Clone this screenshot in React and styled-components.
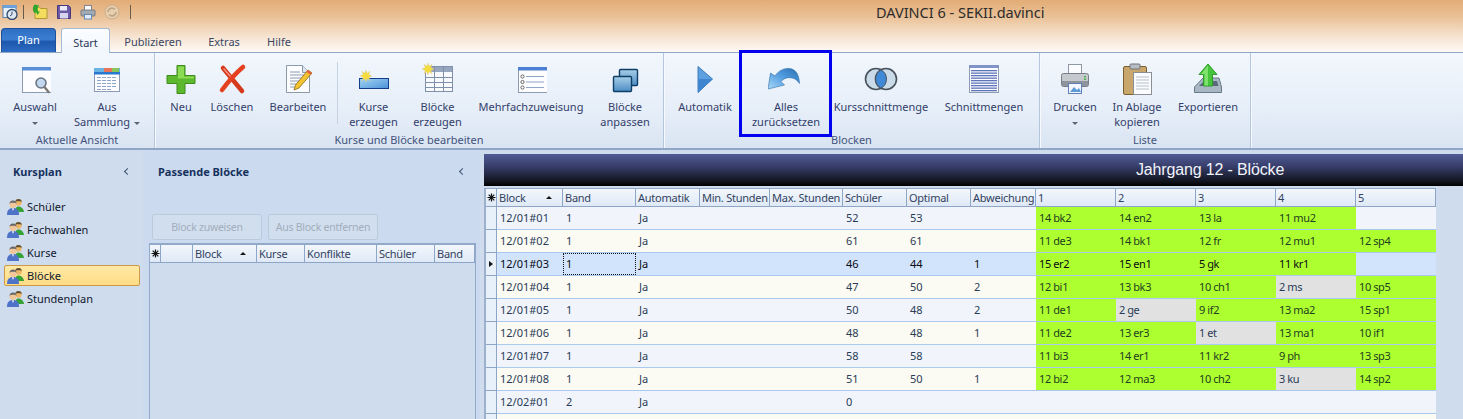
import React from 'react';
import styled, { createGlobalStyle } from 'styled-components';

const GlobalStyle = createGlobalStyle`
  html, body {
    margin: 0;
    padding: 0;
    background: #cfdcee;
  }
  *, *::before, *::after {
    box-sizing: border-box;
  }
`;

const FONT = `"Noto Sans", "Liberation Sans", sans-serif`;

const Window = styled.div`
  width: 1463px;
  height: 419px;
  overflow: hidden;
  font-family: ${FONT};
  font-size: 11px;
  background: #cfdcee;
  display: flex;
  flex-direction: column;
`;

const Header = styled.div`
  height: 52px;
  flex: none;
  background: linear-gradient(180deg, #e3ad76 0%, #e9bf94 30%, #f6e3d0 70%, #fdf9f5 100%);
`;

const TitleBar = styled.div`
  height: 28px;
  display: flex;
  align-items: center;
`;

const QuickBar = styled.div`
  width: 876px;
  flex: none;
  display: flex;
  align-items: center;
  gap: 8px;
  padding-left: 2px;
  margin-top: -4px;
`;

const QuickSep = styled.span`
  width: 1px;
  height: 14px;
  background: #6a5a48;
  margin-left: ${(p) => p.$left || 0}px;
`;

const WindowTitle = styled.div`
  font-size: 14.5px;
  color: #2c2c2c;
  margin-top: -4px;
`;

const TabRow = styled.div`
  height: 24px;
  display: flex;
  align-items: flex-end;
  padding-left: 1px;
`;

const PlanButton = styled.div`
  width: 55px;
  height: 24px;
  border: 1px solid #1c4f9c;
  border-bottom: none;
  border-radius: 4px 4px 0 0;
  background: linear-gradient(180deg, #2f6fc4 0%, #3a7ed2 45%, #1d57ab 55%, #2c6cc4 100%);
  color: #fff;
  display: flex;
  align-items: center;
  justify-content: center;
  padding-bottom: 3px;
  margin-right: 5px;
`;

const Tab = styled.div`
  height: 24px;
  width: ${(p) => p.$width}px;
  display: flex;
  align-items: center;
  justify-content: center;
  color: #3b4663;
  padding-top: 3px;
  position: relative;
  ${(p) =>
    p.$active &&
    `
    color: #26365a;
    background: linear-gradient(180deg, #fbfdff 0%, #f1f6fc 100%);
    border: 1px solid #a7bcd6;
    border-bottom: none;
    border-radius: 3px 3px 0 0;
    z-index: 1;
    margin-bottom: -1px;
    height: 25px;
  `}
`;

const Ribbon = styled.div`
  height: 98px;
  flex: none;
  display: flex;
  border-top: 1px solid #8fa6c6;
  border-bottom: 2px solid #90a6c4;
  background: linear-gradient(180deg, #f2f7fd 0%, #e6eef8 60%, #d9e4f2 100%);
`;

const Group = styled.div`
  width: ${(p) => p.$width}px;
  flex: none;
  display: flex;
  flex-direction: column;
  padding-left: ${(p) => p.$pad || 0}px;
  border-right: 1px solid #b4c6dc;
  box-shadow: 1px 0 0 #f6f9fd;
`;

const GroupButtons = styled.div`
  height: 79px;
  display: flex;
`;

const GroupLabel = styled.div`
  margin-left: ${(p) => -(p.$pad || 0)}px;
  text-align: center;
  line-height: 15px;
  color: #44537c;
`;

const RibbonSep = styled.span`
  width: 1px;
  height: 62px;
  margin: 9px 0 0 1px;
  background: #c5d2e2;
  flex: none;
`;

const RibbonButton = styled.div`
  width: ${(p) => p.$width}px;
  flex: none;
  display: flex;
  flex-direction: column;
  align-items: center;
  padding-top: 10px;
  position: relative;
  color: #33406b;
  text-align: center;
  line-height: 15px;
  white-space: nowrap;
  ${(p) =>
    p.$marked &&
    `
    &::after {
      content: '';
      position: absolute;
      left: -1px;
      top: -3px;
      width: 93px;
      height: 87px;
      border: 3px solid #0000ee;
    }
  `}
`;

const ButtonIcon = styled.div`
  height: 32px;
  margin-bottom: 4px;
  flex: none;
`;

const Caret = styled.span`
  display: inline-block;
  width: 0;
  height: 0;
  border-left: 3px solid transparent;
  border-right: 3px solid transparent;
  border-top: 3px solid #5c6675;
  vertical-align: middle;
  margin-left: ${(p) => p.$left || 0}px;
`;

const Main = styled.div`
  flex: 1;
  display: flex;
  min-height: 0;
`;

const NavPanel = styled.div`
  width: 143px;
  flex: none;
  background: #cfdcee;
  padding-top: 12px;
`;

const PanelHead = styled.div`
  height: 18px;
  display: flex;
  align-items: center;
  justify-content: space-between;
  font-weight: 700;
  color: #17315d;
  padding: ${(p) => p.$pad};
`;

const Chevron = styled.span`
  width: 5px;
  height: 5px;
  border-left: 1.6px solid #3d5272;
  border-bottom: 1.6px solid #3d5272;
  transform: rotate(45deg);
`;

const NavList = styled.div`
  margin-top: 15px;
  display: flex;
  flex-direction: column;
  padding-left: 4px;
`;

const NavItem = styled.div`
  width: 136px;
  height: 23px;
  display: flex;
  align-items: center;
  gap: 3px;
  padding-left: 3px;
  color: #10182c;
  border-radius: 2px;
  ${(p) =>
    p.$active &&
    `
    height: 21px;
    margin: 1px 0;
    background: linear-gradient(180deg, #ffe9a6 0%, #ffdc85 100%);
    border: 1px solid #cc9a47;
    padding-left: 2px;
  `}
`;

const MatchPanel = styled.div`
  width: 337px;
  flex: none;
  background: #cbdaee;
  padding-top: 12px;
  display: flex;
  flex-direction: column;
`;

const ActionRow = styled.div`
  display: flex;
  gap: 6px;
  margin: 34px 0 3px 9px;
`;

const ActionButton = styled.div`
  width: 110px;
  height: 26px;
  display: flex;
  align-items: center;
  justify-content: center;
  font-size: 10.5px;
  letter-spacing: -0.25px;
  color: #a2adbc;
  background: #d1deee;
  border: 1px solid #bccadd;
  border-radius: 2px;
`;

const MiniGrid = styled.div`
  flex: 1;
  margin: 0 4px 0 6px;
  background: #cfdcee;
  border: 1px solid #93a9c8;
  border-top-width: 2px;
  border-bottom: none;
`;

const HeadRow = styled.div`
  display: grid;
  grid-template-columns: ${(p) => p.$cols};
  height: 18px;
`;

const HeadCell = styled.div`
  display: flex;
  align-items: center;
  justify-content: space-between;
  padding: 0 2px;
  letter-spacing: -0.25px;
  color: #33425f;
  white-space: nowrap;
  overflow: hidden;
  background: linear-gradient(180deg, #f3f7fd 0%, #dfe9f6 100%);
  border-right: 1px solid #8da5c6;
  border-bottom: 1px solid #8da5c6;
  ${(p) => p.$star && 'justify-content: center; padding: 0; color: #111;'}
`;

const SortArrow = styled.span`
  width: 0;
  height: 0;
  margin-right: 8px;
  border-left: 3.5px solid transparent;
  border-right: 3.5px solid transparent;
  border-bottom: 3.5px solid #111;
  flex: none;
`;

const Splitter = styled.div`
  width: 4px;
  flex: none;
  background: #cfdcee;
`;

const Content = styled.div`
  flex: 1;
  display: flex;
  flex-direction: column;
  min-width: 0;
  padding-top: 4px;
  background: #cfdcee;
`;

const ContentTitle = styled.div`
  height: 32px;
  flex: none;
  margin-bottom: 2px;
  display: flex;
  align-items: center;
  padding-left: 652px;
  font-family: "Liberation Sans", Arial, sans-serif;
  font-size: 16px;
  letter-spacing: -0.15px;
  color: #f2f4fa;
  background: linear-gradient(180deg, #515b93 0%, #3a4170 35%, #12141f 85%, #000 100%);
`;

const GridWrap = styled.div`
  width: 952px;
  flex: 1;
  border-left: 2px solid #9db1cd;
  border-top: 1px solid #93a9c8;
  background: #fbfbf3;
`;

const Row = styled.div`
  display: grid;
  grid-template-columns: ${(p) => p.$cols};
  height: 23px;
  line-height: 22px;
  color: ${(p) => (p.$selected ? '#0a0a14' : '#2a3c58')};
  background: ${(p) => (p.$selected ? '#d2e4fb' : p.$odd ? '#f1f5fb' : '#fbfbf3')};
  border-bottom: 1px solid #a9c9ee;
`;

const RowHead = styled.div`
  background: #e8f0fa;
  border-right: 1px solid #8da5c6;
  margin-bottom: -1px;
  border-bottom: 1px solid #8da5c6;
  display: flex;
  align-items: center;
  justify-content: center;
`;

const RowPointer = styled.span`
  width: 0;
  height: 0;
  border-top: 3.5px solid transparent;
  border-bottom: 3.5px solid transparent;
  border-left: 4px solid #111;
`;

const Cell = styled.div`
  padding-left: 3px;
  white-space: nowrap;
  overflow: hidden;
  ${(p) => p.$focus && 'outline: 1px dotted #111; outline-offset: -1px;'}
`;

const CourseCell = styled(Cell)`
  letter-spacing: -0.3px;
  word-spacing: -0.4px;
  background: ${(p) =>
    p.$tint === 'green' ? '#adff2f' : p.$tint === 'gray' ? '#e1e1e1' : 'transparent'};
  color: ${(p) => (p.$tint === 'green' && !p.$strong ? '#1f4020' : 'inherit')};
`;

const Star = () => (
  <svg width="9" height="9" viewBox="0 0 9 9">
    <path d="M4.5 0.5v8M0.5 4.5h8M1.7 1.7l5.6 5.6M7.3 1.7l-5.6 5.6" stroke="#111" strokeWidth="1.2" />
  </svg>
);

const People = () => (
  <svg width="17" height="18" viewBox="0 0 17 18">
    <circle cx="11.5" cy="4.5" r="3.2" fill="#eeb768" />
    <path d="M8.3 4.2a3.2 3.2 0 0 1 6.4 0l-1.2-1h-4z" fill="#5f4f30" />
    <path d="M8 14c0-4 1.5-5.5 3.5-5.5S16.5 10 17 14z" fill="#36a336" />
    <circle cx="6" cy="6.5" r="3.5" fill="#efc79a" />
    <path d="M2.5 6a3.5 3.5 0 0 1 7 0L8.2 4.8H3.8z" fill="#666" />
    <path d="M0 17c0-5 2-7 6-7s6 2 6 7z" fill="#4f73c8" />
    <path d="M5 10.2h2l-1 2.8z" fill="#fff" />
  </svg>
);

const WindowIcon = ({ children, bar = '#5a8fd8' }) => (
  <g>
    <rect x="3.5" y="4.5" width="29" height="25" fill="#fdfdff" stroke="#8b9cb4" />
    <rect x="3" y="4" width="30" height="3.5" fill={bar} />
    {children}
  </g>
);

const AuswahlIcon = () => (
  <svg width="32" height="32" viewBox="0 0 32 32">
    <WindowIcon />
    <circle cx="22" cy="20" r="5" fill="#c3d7ee" stroke="#6b7684" strokeWidth="1.6" />
    <path d="M25.5 24l4 5" stroke="#7b7b73" strokeWidth="2.4" strokeLinecap="round" />
  </svg>
);

const SammlungIcon = () => (
  <svg width="32" height="32" viewBox="0 0 32 32">
    <rect x="3.5" y="5.5" width="25" height="23" fill="#fdfdff" stroke="#8b9cb4" />
    <rect x="3" y="5" width="26" height="4" fill="#6ab4e4" />
    <rect x="13" y="5" width="8" height="4" fill="#e8745a" />
    <rect x="21" y="5" width="7" height="4" fill="#86c65a" />
    <rect x="3" y="9" width="26" height="2.5" fill="#2878d0" />
    <path d="M6 14.5h20M6 17.5h20M6 20.5h20M6 23.5h20M6 26.5h14" stroke="#8fa6c8" strokeDasharray="4 1" />
  </svg>
);

const PlusIcon = () => (
  <svg width="32" height="32" viewBox="0 0 32 32">
    <path d="M12 2.5h8v10h10v8H20v10h-8v-10H2v-8h10z" fill="#5cb82c" stroke="#3f8a1c" />
    <path d="M13 3.5h6v10h10v2H13z" fill="#8bdc52" />
  </svg>
);

const CrossIcon = () => (
  <svg width="32" height="32" viewBox="0 0 32 32">
    <path d="M7 5L26 28" stroke="#d63a1e" strokeWidth="4.5" strokeLinecap="round" />
    <path d="M27 4C20 10 12 19 6 27" stroke="#e5401f" strokeWidth="4.5" strokeLinecap="round" />
    <path d="M8 6l6 7" stroke="#f69080" strokeWidth="1.4" strokeLinecap="round" />
  </svg>
);

const EditIcon = () => (
  <svg width="32" height="32" viewBox="0 0 32 32">
    <path d="M4.5 2.5h16l7 7v20h-23z" fill="#fbfdff" stroke="#8c99a8" />
    <path d="M20.5 2.5v7h7" fill="#dbe4ee" stroke="#8c99a8" />
    <path d="M8 9h10M8 12h14M8 15h14M8 18h10M8 21h8M8 24h6" stroke="#8f9cb4" />
    <path d="M26 7l4 3-13 15-5 2 1.5-5z" fill="#f4c430" stroke="#8a6a18" strokeWidth=".8" />
    <path d="M26 7l4 3-1.6 1.8-4-3z" fill="#e5603c" />
  </svg>
);

const Burst = ({ x, y }) => (
  <g transform={`translate(${x} ${y})`}>
    <path
      d="M6 0l1.2 3.2L10 1.2 8.8 4.4 12 6 8.8 7.4 10 10.8 7.2 8.8 6 12 4.8 8.8 2 10.8 3.2 7.4 0 6l3.2-1.6L2 1.2l2.8 2z"
      fill="#f4dd3c"
      stroke="#d8c8a0"
      strokeWidth=".4"
    />
  </g>
);

const KurseIcon = () => (
  <svg width="32" height="32" viewBox="0 0 32 32">
    <defs>
      <linearGradient id="kg" x1="0" y1="0" x2="1" y2="1">
        <stop offset="0" stopColor="#a4d6f4" />
        <stop offset="1" stopColor="#4a90d8" />
      </linearGradient>
    </defs>
    <rect x="1.5" y="15.5" width="29" height="10" fill="url(#kg)" stroke="#163d8c" />
    <Burst x={2} y={7} />
  </svg>
);

const BloeckeIcon = () => (
  <svg width="32" height="32" viewBox="0 0 32 32">
    <rect x="3.5" y="3.5" width="27" height="25" fill="#f8f9fc" stroke="#8190aa" />
    <rect x="4" y="4" width="26" height="5" fill="#98a5be" />
    <path d="M3.5 14.5h27M3.5 19.5h27M3.5 24.5h27M12.5 3.5v25M21.5 3.5v25" stroke="#8190aa" />
    <Burst x={0} y={0} />
  </svg>
);

const MehrfachIcon = () => (
  <svg width="32" height="32" viewBox="0 0 32 32">
    <WindowIcon bar="#4c80d4" />
    <path d="M11 13.5h18M11 19h18M11 24.5h18" stroke="#8ea6c6" />
    <circle cx="7.5" cy="13.5" r="1.6" fill="#fff" stroke="#666" />
    <circle cx="7.5" cy="19" r="1.6" fill="#fff" stroke="#666" />
    <circle cx="7.5" cy="24.5" r="1.6" fill="#fff" stroke="#666" />
  </svg>
);

const AnpassenIcon = () => (
  <svg width="32" height="32" viewBox="0 0 32 32">
    <defs>
      <linearGradient id="ag" x1="0" y1="0" x2="0" y2="1">
        <stop offset="0" stopColor="#a8cfe8" />
        <stop offset="1" stopColor="#4c8cc4" />
      </linearGradient>
    </defs>
    <rect x="10.5" y="6.5" width="18" height="16" rx="1" fill="url(#ag)" stroke="#0e3d66" strokeWidth="1.4" />
    <rect x="4.5" y="13.5" width="18" height="15" rx="1" fill="url(#ag)" stroke="#0e3d66" strokeWidth="1.4" />
  </svg>
);

const PlayIcon = () => (
  <svg width="32" height="32" viewBox="0 0 32 32">
    <path d="M9 3.5L23.5 16 9 29.5z" fill="#5da0e0" stroke="#3f7ebc" />
    <path d="M9 16h14.5L9 29.5z" fill="#3f86d0" />
  </svg>
);

const UndoIcon = () => (
  <svg width="36" height="32" viewBox="0 0 36 32">
    <defs>
      <linearGradient id="ug" x1="0" y1="1" x2="1" y2="0">
        <stop offset="0" stopColor="#a8d8f8" />
        <stop offset=".55" stopColor="#4f9ade" />
        <stop offset="1" stopColor="#2a6fb0" />
      </linearGradient>
    </defs>
    <path
      d="M0 26L2.5 10L7 13C10 8 16 5 21 5.5C27 6 31 10 31.5 20.5C29 17 27 15.5 24 15C20 14 16 15 13 18.5L16.5 22Z"
      fill="url(#ug)"
      stroke="#2f6ea8"
      strokeWidth=".6"
    />
  </svg>
);

const VennIcon = () => (
  <svg width="34" height="32" viewBox="0 0 34 32">
    <circle cx="12" cy="16" r="10.5" fill="#c9dae8" stroke="#49525c" strokeWidth="1.6" />
    <circle cx="22" cy="16" r="10.5" fill="#c9dae8" stroke="#49525c" strokeWidth="1.6" />
    <path d="M17 6.8A10.5 10.5 0 0 1 17 25.2A10.5 10.5 0 0 1 17 6.8Z" fill="#3f8ad8" stroke="#49525c" />
  </svg>
);

const LinesIcon = () => (
  <svg width="32" height="32" viewBox="0 0 32 32">
    <rect x="1.5" y="2.5" width="29" height="27" fill="#fdfdff" stroke="#8b9cb4" />
    <rect x="1" y="2" width="30" height="3" fill="#8194c8" />
    {[7, 9.5, 12, 14.5, 17, 19.5, 22, 24.5, 27].map((y) => (
      <rect key={y} x="3" y={y} width="26" height="1.3" fill="#5d74b8" />
    ))}
  </svg>
);

const PrinterIcon = () => (
  <svg width="32" height="32" viewBox="0 0 32 32">
    <rect x="9.5" y="1.5" width="13" height="10" fill="#fbfcff" stroke="#9098a4" />
    <rect x="2.5" y="10.5" width="27" height="13" rx="2" fill="#c5c9ce" stroke="#777e88" />
    <rect x="3" y="18" width="26" height="5" fill="#8e949c" />
    <rect x="25" y="13" width="2" height="1.5" fill="#50b050" />
    <rect x="25" y="15.5" width="2" height="1.5" fill="#50b050" />
    <rect x="9.5" y="20.5" width="13" height="10" fill="#f4f7ff" stroke="#5f7fb8" />
    <path d="M11 29l4-5 3 3 2-2 2 4z" fill="#5d9ad8" />
  </svg>
);

const ClipboardIcon = () => (
  <svg width="32" height="32" viewBox="0 0 32 32">
    <rect x="2.5" y="3.5" width="23" height="28" rx="1.5" fill="#c9a76c" stroke="#7a5f30" />
    <rect x="9" y="1" width="10" height="5" rx="1" fill="#b8bdc4" stroke="#6e747c" />
    <rect x="12.5" y="9.5" width="18" height="22" fill="#fbfcfd" stroke="#8a8f96" />
    <path d="M15 14h13M15 17h13M15 20h13M15 23h13M15 26h13" stroke="#b7bfca" />
  </svg>
);

const ExportIcon = () => (
  <svg width="32" height="32" viewBox="0 0 32 32">
    <path d="M2.5 24L11 15h16l2.5 9v5.500h-27z" fill="#a9b6c4" stroke="#6a7a8a" />
    <path d="M7 23l5-5h13l1.5 5z" fill="#5b6a7a" />
    <path d="M16 1l9 10.5h-4.5V23h-9V11.5H7z" fill="#45c43c" stroke="#2f9a2c" />
    <path d="M16 2.5v20h-3.5V11H9z" fill="#7fe26c" />
  </svg>
);

const ClockWindow = () => (
  <svg width="16" height="16" viewBox="0 0 16 16">
    <rect x="1" y="1.5" width="13" height="12" fill="#e8f0fa" stroke="#5d7ea6" />
    <rect x=".5" y="1" width="14" height="3" fill="#6ba0d8" />
    <circle cx="10" cy="10.5" r="5" fill="#dfe8f0" stroke="#2f4a70" strokeWidth="1.3" />
    <path d="M10 7.5v3l-2 1.5" stroke="#2f4a70" fill="none" />
  </svg>
);

const FolderSmall = () => (
  <svg width="16" height="16" viewBox="0 0 16 16">
    <path d="M3 3h4.5l1 1.5h6.5v10H3z" fill="#f4dc5c" stroke="#b09a34" />
    <path d="M2.5 .5C.2 3.5.5 7 3 9.5l1-1.8 1.4 3.3 2.6-3.6-1.6.3C5 5.5 5.5 3.5 7 1.5z" fill="#2ea52e" />
  </svg>
);

const FloppySmall = () => (
  <svg width="16" height="16" viewBox="0 0 16 16">
    <path d="M1.5 1.5h11l2 2v11h-13z" fill="#6a5aa8" stroke="#46387c" />
    <rect x="4" y="2" width="7" height="4.5" fill="#eceaf6" />
    <rect x="4" y="9" width="8" height="5.5" fill="#d8d4ec" />
  </svg>
);

const PrinterSmall = () => (
  <svg width="16" height="16" viewBox="0 0 16 16">
    <rect x="4.5" y="1.5" width="7" height="5" fill="#fafbff" stroke="#80868f" />
    <rect x="1" y="6" width="14" height="6" rx="1" fill="#a4aab2" stroke="#666d76" strokeWidth=".8" />
    <rect x="4.5" y="10.5" width="7" height="4.5" fill="#e4eefa" stroke="#5f86b8" />
  </svg>
);

const RefreshSmall = () => (
  <svg width="16" height="16" viewBox="0 0 16 16">
    <circle cx="8" cy="8" r="7" fill="#e8cfae" stroke="#c9ae8c" />
    <path d="M4 8a4 4 0 0 1 7-2.5M12 8a4 4 0 0 1-7 2.5" stroke="#bda484" strokeWidth="1.6" fill="none" />
  </svg>
);

const NAV_ITEMS = ['Schüler', 'Fachwahlen', 'Kurse', 'Blöcke', 'Stundenplan'];

const MINI_COLS = '11px 32px 64px 48px 72px 58px 1fr';
const MINI_HEAD = ['', 'Block', 'Kurse', 'Konflikte', 'Schüler', 'Band'];

const COLS = '11px 66px 73px 64px 70px 73px 64px 64px 65px 80px 80px 80px 80px 80px';
const COL_HEAD = [
  'Block', 'Band', 'Automatik', 'Min. Stunden', 'Max. Stunden', 'Schüler',
  'Optimal', 'Abweichung', '1', '2', '3', '4', '5',
];

const ROWS = [
  { id: '12/01#01', band: '1', s: '52', o: '53', d: '', k: ['14 bk2', '14 en2', '13 la', '11 mu2', ''] },
  { id: '12/01#02', band: '1', s: '61', o: '61', d: '', k: ['11 de3', '14 bk1', '12 fr', '12 mu1', '12 sp4'] },
  { id: '12/01#03', band: '1', s: '46', o: '44', d: '1', k: ['15 er2', '15 en1', '5 gk', '11 kr1', ''], selected: true },
  { id: '12/01#04', band: '1', s: '47', o: '50', d: '2', k: ['12 bi1', '13 bk3', '10 ch1', '2 ms', '10 sp5'], gray: 3 },
  { id: '12/01#05', band: '1', s: '50', o: '48', d: '2', k: ['11 de1', '2 ge', '9 if2', '13 ma2', '15 sp1'], gray: 1 },
  { id: '12/01#06', band: '1', s: '48', o: '48', d: '1', k: ['11 de2', '13 er3', '1 et', '13 ma1', '10 if1'], gray: 2 },
  { id: '12/01#07', band: '1', s: '58', o: '58', d: '', k: ['11 bi3', '14 er1', '11 kr2', '9 ph', '13 sp3'] },
  { id: '12/01#08', band: '1', s: '51', o: '50', d: '1', k: ['12 bi2', '12 ma3', '10 ch2', '3 ku', '14 sp2'], gray: 3 },
  { id: '12/02#01', band: '2', s: '0', o: '', d: '', k: ['', '', '', '', ''] },
  { id: '', band: '', s: '', o: '', d: '', k: ['', '', '', '', ''] },
];

const RIBBON = [
  {
    label: 'Aktuelle Ansicht',
    width: 155,
    pad: 5,
    items: [
      { w: 60, icon: <AuswahlIcon />, text: 'Auswahl', caret: 'below' },
      { w: 84, icon: <SammlungIcon />, text: 'Aus', line2: 'Sammlung', caret: 'inline' },
    ],
  },
  {
    label: 'Kurse und Blöcke bearbeiten',
    width: 509,
    pad: 3,
    items: [
      { w: 46, icon: <PlusIcon />, text: 'Neu' },
      { w: 56, icon: <CrossIcon />, text: 'Löschen' },
      { w: 76, icon: <EditIcon />, text: 'Bearbeiten' },
      { sep: true },
      { w: 71, icon: <KurseIcon />, text: 'Kurse', line2: 'erzeugen' },
      { w: 57, icon: <BloeckeIcon />, text: 'Blöcke', line2: 'erzeugen' },
      { w: 130, icon: <MehrfachIcon />, text: 'Mehrfachzuweisung' },
      { w: 58, icon: <AnpassenIcon />, text: 'Blöcke', line2: 'anpassen' },
    ],
  },
  {
    label: 'Blocken',
    width: 376,
    pad: 6,
    items: [
      { w: 70, icon: <PlayIcon />, text: 'Automatik' },
      { w: 92, icon: <UndoIcon />, text: 'Alles', line2: 'zurücksetzen', marked: true },
      { w: 98, icon: <VennIcon />, text: 'Kursschnittmenge' },
      { w: 108, icon: <LinesIcon />, text: 'Schnittmengen' },
    ],
  },
  {
    label: 'Liste',
    width: 211,
    pad: 6,
    items: [
      { w: 58, icon: <PrinterIcon />, text: 'Drucken', caret: 'below' },
      { w: 66, icon: <ClipboardIcon />, text: 'In Ablage', line2: 'kopieren' },
      { w: 76, icon: <ExportIcon />, text: 'Exportieren' },
    ],
  },
];

const RibbonItem = ({ item }) => (
  <RibbonButton $width={item.w} $marked={item.marked}>
    <ButtonIcon>{item.icon}</ButtonIcon>
    <div>{item.text}</div>
    {item.line2 && (
      <div>
        {item.line2}
        {item.caret === 'inline' && <Caret $left={4} />}
      </div>
    )}
    {item.caret === 'below' && (
      <div>
        <Caret />
      </div>
    )}
  </RibbonButton>
);

const courseTint = (row, j) => {
  if (!row.k[j]) return undefined;
  return row.gray === j ? 'gray' : 'green';
};

export default function App() {
  return (
    <Window>
      <GlobalStyle />
      <Header>
        <TitleBar>
          <QuickBar>
            <ClockWindow />
            <QuickSep $left={-3} />
            <FolderSmall />
            <FloppySmall />
            <PrinterSmall />
            <RefreshSmall />
            <QuickSep $left={2} />
          </QuickBar>
          <WindowTitle>DAVINCI 6 - SEKII.davinci</WindowTitle>
        </TitleBar>
        <TabRow>
          <PlanButton>Plan</PlanButton>
          <Tab $active $width={49}>Start</Tab>
          <Tab $width={86}>Publizieren</Tab>
          <Tab $width={56}>Extras</Tab>
          <Tab $width={54}>Hilfe</Tab>
        </TabRow>
      </Header>

      <Ribbon>
        {RIBBON.map((group) => (
          <Group key={group.label} $width={group.width} $pad={group.pad}>
            <GroupButtons>
              {group.items.map((item, i) =>
                item.sep ? <RibbonSep key={i} /> : <RibbonItem key={i} item={item} />
              )}
            </GroupButtons>
            <GroupLabel $pad={group.pad}>{group.label}</GroupLabel>
          </Group>
        ))}
      </Ribbon>

      <Main>
        <NavPanel>
          <PanelHead $pad="0 13px 0 13px">
            Kursplan
            <Chevron />
          </PanelHead>
          <NavList>
            {NAV_ITEMS.map((name) => (
              <NavItem key={name} $active={name === 'Blöcke'}>
                <People />
                {name}
              </NavItem>
            ))}
          </NavList>
        </NavPanel>

        <MatchPanel>
          <PanelHead $pad="0 15px 0 15px">
            Passende Blöcke
            <Chevron />
          </PanelHead>
          <ActionRow>
            <ActionButton>Block zuweisen</ActionButton>
            <ActionButton>Aus Block entfernen</ActionButton>
          </ActionRow>
          <MiniGrid>
            <HeadRow $cols={MINI_COLS}>
              <HeadCell $star>
                <Star />
              </HeadCell>
              {MINI_HEAD.map((h, i) => (
                <HeadCell key={i}>
                  {h}
                  {h === 'Block' && <SortArrow />}
                </HeadCell>
              ))}
            </HeadRow>
          </MiniGrid>
        </MatchPanel>

        <Splitter />

        <Content>
          <ContentTitle>Jahrgang 12 - Blöcke</ContentTitle>
          <GridWrap>
            <HeadRow $cols={COLS}>
              <HeadCell $star>
                <Star />
              </HeadCell>
              {COL_HEAD.map((h) => (
                <HeadCell key={h}>
                  {h}
                  {h === 'Block' && <SortArrow />}
                </HeadCell>
              ))}
            </HeadRow>
            {ROWS.map((row, i) => (
              <Row key={i} $cols={COLS} $odd={i % 2 === 0} $selected={row.selected}>
                <RowHead>{row.selected && <RowPointer />}</RowHead>
                <Cell>{row.id}</Cell>
                <Cell $focus={row.selected}>{row.band}</Cell>
                <Cell>{row.id && 'Ja'}</Cell>
                <Cell />
                <Cell />
                <Cell>{row.s}</Cell>
                <Cell>{row.o}</Cell>
                <Cell>{row.d}</Cell>
                {row.k.map((k, j) => (
                  <CourseCell key={j} $tint={courseTint(row, j)} $strong={row.selected}>
                    {k}
                  </CourseCell>
                ))}
              </Row>
            ))}
          </GridWrap>
        </Content>
      </Main>
    </Window>
  );
}
